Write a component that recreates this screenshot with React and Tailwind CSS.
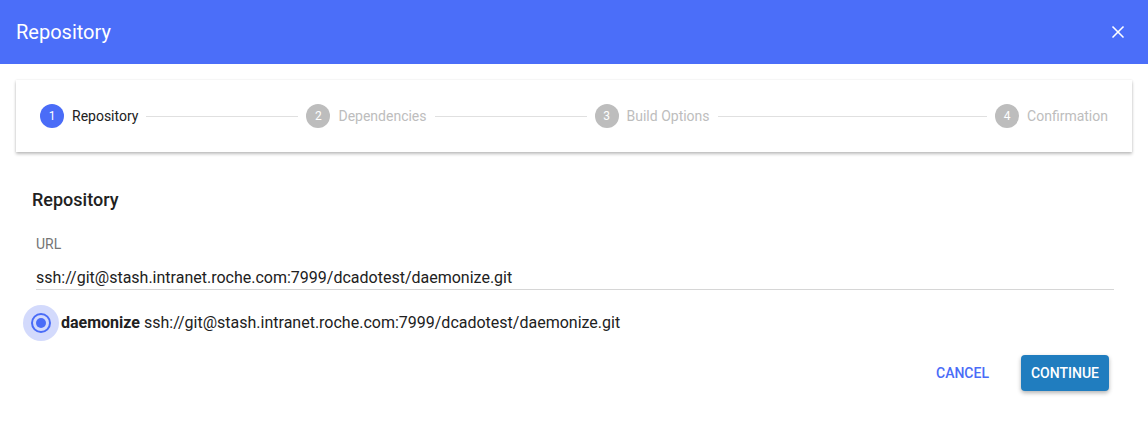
import { X } from "lucide-react";

const steps = [
  { n: 1, label: "Repository", active: true, line: "w-[152px]" },
  { n: 2, label: "Dependencies", line: "w-[152px]" },
  { n: 3, label: "Build Options", line: "flex-1" },
  { n: 4, label: "Confirmation" },
];

function Stepper() {
  return (
    <div className="mx-4 mt-4 flex h-[72px] items-center bg-white px-6 shadow-[0_2px_3px_rgba(0,0,0,0.25),0_0_2px_rgba(0,0,0,0.08)]">
      {steps.map((step) => (
        <div key={step.n} className={`flex items-center ${step.line === "flex-1" ? "flex-1" : ""}`}>
          <div
            className={`flex h-6 w-6 items-center justify-center rounded-full text-xs text-white ${
              step.active ? "bg-[#4a6cf7]" : "bg-[#bdbdbd]"
            }`}
          >
            {step.n}
          </div>
          <span className={`ml-2 text-sm ${step.active ? "text-[#212121]" : "text-[#bdbdbd]"}`}>
            {step.label}
          </span>
          {step.line && <div className={`mx-2 h-px bg-[#e0e0e0] ${step.line}`} />}
        </div>
      ))}
    </div>
  );
}

export default function App() {
  return (
    <div className="h-[428px] w-[1148px] overflow-hidden bg-white font-['Roboto',sans-serif]">
      <header className="flex h-16 items-center justify-between bg-[#4b6ef9] pl-4 pr-5 text-white">
        <h1 className="text-xl font-normal">Repository</h1>
        <X size={20} strokeWidth={2} />
      </header>

      <Stepper />

      <section className="px-8 pt-[36px]">
        <h2 className="text-lg font-medium leading-6 text-[#212121]">Repository</h2>

        <div className="mt-[24px] pl-1 pr-[2px]">
          <label className="block text-sm leading-4 text-[#757575]">URL</label>
          <div className="mt-4 border-b border-[#d6d6d6] pb-px text-base leading-5 text-[#212121]">
            ssh://git@stash.intranet.roche.com:7999/dcadotest/daemonize.git
          </div>
        </div>

        <div className="-ml-[9px] mt-[15px] flex items-center">
          <div className="flex h-9 w-9 items-center justify-center rounded-full bg-[#d3dafc]">
            <div className="flex h-5 w-5 items-center justify-center rounded-full border-2 border-[#4a6cf7]">
              <div className="h-[10px] w-[10px] rounded-full bg-[#4a6cf7]" />
            </div>
          </div>
          <p className="ml-[2px] text-base text-[#212121]">
            <span className="font-bold">daemonize</span> ssh://git@stash.intranet.roche.com:7999/dcadotest/daemonize.git
          </p>
        </div>
      </section>

      <div className="mt-[14px] flex items-center justify-end gap-4 pr-[39px]">
        <button className="px-4 py-2 text-sm font-medium uppercase text-[#4a6cf7]">Cancel</button>
        <button className="h-9 rounded bg-[#207dbf] px-[10px] text-sm font-medium uppercase text-white shadow-[0_2px_4px_rgba(0,0,0,0.3)]">
          Continue
        </button>
      </div>
    </div>
  );
}
